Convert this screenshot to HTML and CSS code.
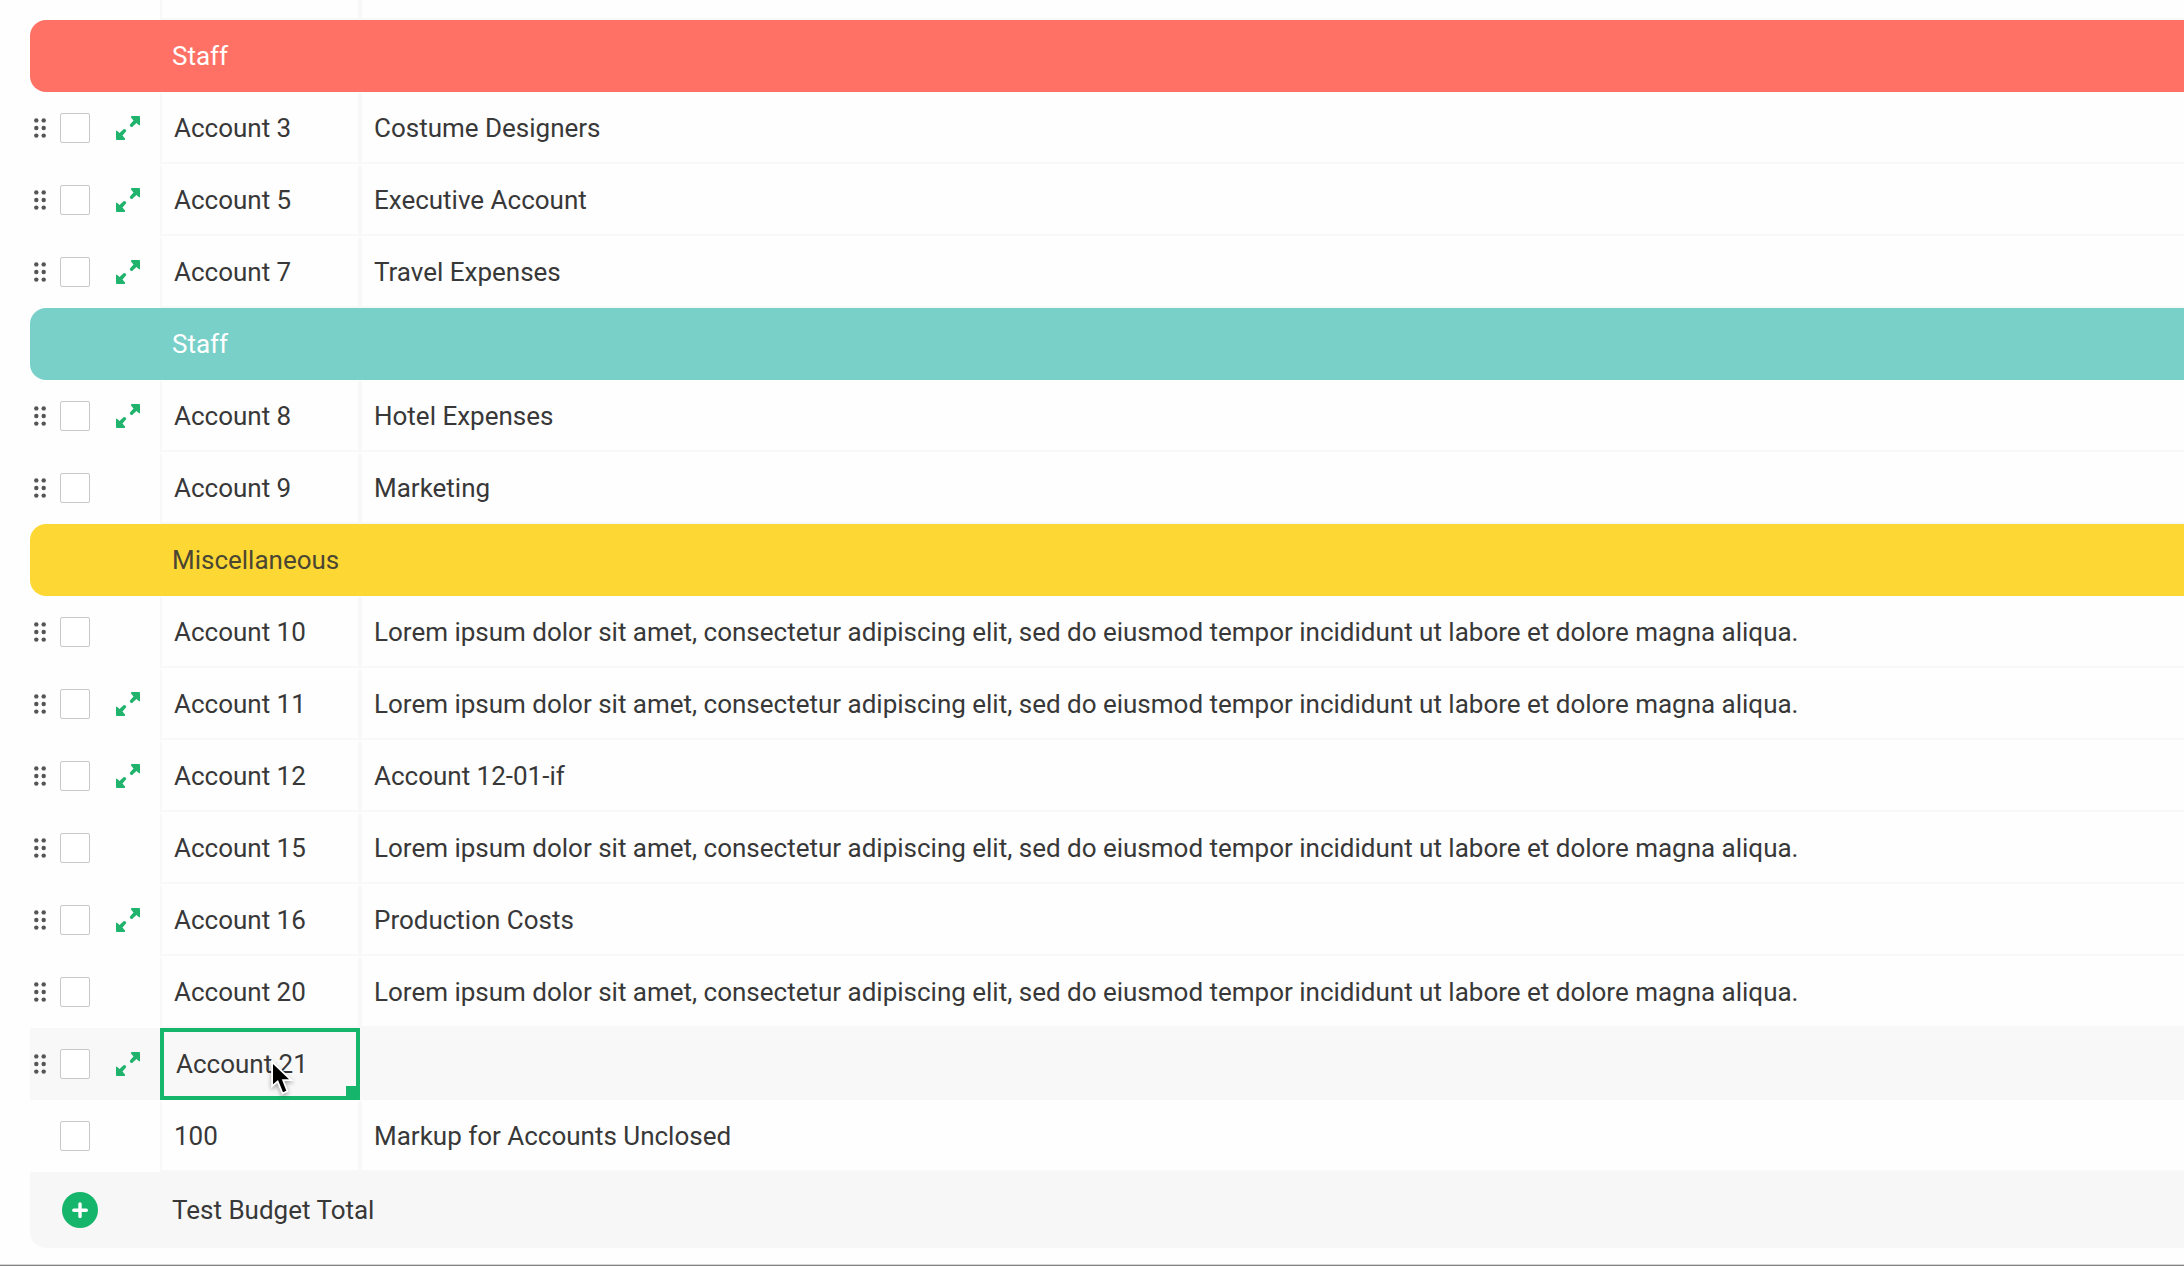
FILE: index.html
```
<!DOCTYPE html>
<html lang="en">
<head>
<meta charset="utf-8">
<title>Test Budget</title>
<link rel="stylesheet" href="styles.css">
</head>
<body>
<svg class="sprites" aria-hidden="true">
  <symbol id="grip" viewBox="0 0 12 20">
    <circle cx="2.3" cy="2.4" r="2.2"/><circle cx="9.7" cy="2.4" r="2.2"/>
    <circle cx="2.3" cy="10" r="2.2"/><circle cx="9.7" cy="10" r="2.2"/>
    <circle cx="2.3" cy="17.6" r="2.2"/><circle cx="9.7" cy="17.6" r="2.2"/>
  </symbol>
  <symbol id="expand" viewBox="0 0 24 24">
    <path d="M16 0h7q1 0 1 1v7.500q0 1.500-1.300.6L20.500 7l-3.800 3.400q-1.200 1-2.300 0t0-2.300L17.500 4.500L15 1.600Q14.300 0 16 0z"/>
    <path d="M8 24H1q-1 0-1-1v-7.500q0-1.500 1.300-.6L3.500 17l3.800-3.400q1.200-1 2.300 0t0 2.300L6.500 19.500L9 22.400Q9.700 24 8 24z"/>
  </symbol>
</svg>
<main class="table">
  <div class="row row-cut"><div class="tools"></div><div class="cell id"></div><div class="cell text"></div></div>

  <div class="group coral">Staff</div>
  <div class="row"><div class="tools"><svg class="grip"><use href="#grip"/></svg><span class="check"></span><svg class="expand"><use href="#expand"/></svg></div><div class="cell id">Account 3</div><div class="cell text">Costume Designers</div></div>
  <div class="row"><div class="tools"><svg class="grip"><use href="#grip"/></svg><span class="check"></span><svg class="expand"><use href="#expand"/></svg></div><div class="cell id">Account 5</div><div class="cell text">Executive Account</div></div>
  <div class="row"><div class="tools"><svg class="grip"><use href="#grip"/></svg><span class="check"></span><svg class="expand"><use href="#expand"/></svg></div><div class="cell id">Account 7</div><div class="cell text">Travel Expenses</div></div>

  <div class="group teal">Staff</div>
  <div class="row"><div class="tools"><svg class="grip"><use href="#grip"/></svg><span class="check"></span><svg class="expand"><use href="#expand"/></svg></div><div class="cell id">Account 8</div><div class="cell text">Hotel Expenses</div></div>
  <div class="row"><div class="tools"><svg class="grip"><use href="#grip"/></svg><span class="check"></span></div><div class="cell id">Account 9</div><div class="cell text">Marketing</div></div>

  <div class="group yellow">Miscellaneous</div>
  <div class="row"><div class="tools"><svg class="grip"><use href="#grip"/></svg><span class="check"></span></div><div class="cell id">Account 10</div><div class="cell text">Lorem ipsum dolor sit amet, consectetur adipiscing elit, sed do eiusmod tempor incididunt ut labore et dolore magna aliqua.</div></div>
  <div class="row"><div class="tools"><svg class="grip"><use href="#grip"/></svg><span class="check"></span><svg class="expand"><use href="#expand"/></svg></div><div class="cell id">Account 11</div><div class="cell text">Lorem ipsum dolor sit amet, consectetur adipiscing elit, sed do eiusmod tempor incididunt ut labore et dolore magna aliqua.</div></div>
  <div class="row"><div class="tools"><svg class="grip"><use href="#grip"/></svg><span class="check"></span><svg class="expand"><use href="#expand"/></svg></div><div class="cell id">Account 12</div><div class="cell text">Account 12-01-if</div></div>
  <div class="row"><div class="tools"><svg class="grip"><use href="#grip"/></svg><span class="check"></span></div><div class="cell id">Account 15</div><div class="cell text">Lorem ipsum dolor sit amet, consectetur adipiscing elit, sed do eiusmod tempor incididunt ut labore et dolore magna aliqua.</div></div>
  <div class="row"><div class="tools"><svg class="grip"><use href="#grip"/></svg><span class="check"></span><svg class="expand"><use href="#expand"/></svg></div><div class="cell id">Account 16</div><div class="cell text">Production Costs</div></div>
  <div class="row"><div class="tools"><svg class="grip"><use href="#grip"/></svg><span class="check"></span></div><div class="cell id">Account 20</div><div class="cell text">Lorem ipsum dolor sit amet, consectetur adipiscing elit, sed do eiusmod tempor incididunt ut labore et dolore magna aliqua.</div></div>
  <div class="row hovered"><div class="tools"><svg class="grip"><use href="#grip"/></svg><span class="check"></span><svg class="expand"><use href="#expand"/></svg></div><div class="cell id selected">Account 21<svg class="cursor" viewBox="0 0 26 36"><path d="M3 2V22.300L8 18L13 30.200L16.300 28.800L11.800 17.300H19Z"/></svg></div><div class="cell text"></div></div>
  <div class="row"><div class="tools"><span class="check"></span></div><div class="cell id">100</div><div class="cell text">Markup for Accounts Unclosed</div></div>

  <footer class="total">
    <button class="add" aria-label="Add account"><svg viewBox="0 0 36 36"><path d="M18 12v12.500M11.800 18.200h12.500"/></svg></button>
    <span>Test Budget Total</span>
  </footer>
</main>
</body>
</html>
```
FILE: styles.css
```
* { box-sizing: border-box; }

body {
  margin: 0;
  height: 1266px;
  overflow: hidden;
  display: flex;
  flex-direction: column;
  justify-content: space-between;
  background: #fefefe;
  border-bottom: 1px solid #858585;
  box-shadow: inset 0 -1px #d4d4d4;
  color: #383838;
  font: 26px/36px Roboto, sans-serif;
  letter-spacing: -0.006px;
}

.sprites { display: none; }

.table { padding-left: 30px; }

.row {
  display: grid;
  grid-template-columns: 130px 200px 1fr;
  height: 72px;
}
.row-cut { height: 20px; }

.tools {
  display: grid;
  grid-template-columns: 26px 30px 24px;
  align-items: center;
  padding-left: 4px;
}
.grip { width: 12px; height: 20px; fill: #555; grid-column: 1; }
.check {
  grid-column: 2;
  width: 30px;
  height: 30px;
  background: #fff;
  border: 1px solid #c8c8c8;
  border-radius: 2px;
}
.expand { grid-column: 3; width: 24px; height: 24px; margin-left: 26px; fill: #1fb36b; }

.cell {
  display: flex;
  align-items: center;
  border: 2px solid #f8f8f8;
  border-top-color: transparent;
  padding-left: 12px;
  white-space: nowrap;
}
.text { border-right: 0; }
.row-cut .cell { border-top: 0; }

.hovered { background: #f8f8f8; }
.selected {
  position: relative;
  border: 4px solid #15b56b;
}
.selected::after {
  content: "";
  position: absolute;
  right: -4px;
  bottom: -4px;
  width: 14px;
  height: 14px;
  background: #15b56b;
}
.cursor {
  position: absolute;
  left: 106px;
  top: 30px;
  width: 26px;
  height: 36px;
  overflow: visible;
  fill: #000;
  stroke: #fff;
  stroke-width: 3.6;
  paint-order: stroke;
  filter: drop-shadow(0 2px 2px rgba(0, 0, 0, .35));
}

.group {
  height: 72px;
  display: flex;
  align-items: center;
  padding-left: 142px;
  border-radius: 16px 0 0 16px;
}
.coral { background: #ff7165; color: #fff; }
.teal { background: #78d0c9; color: #fff; }
.yellow { background: #fdd835; color: #4b4632; }

.total {
  height: 76px;
  display: grid;
  grid-template-columns: 110px 1fr;
  align-items: center;
  padding-left: 32px;
  background: #f7f7f7;
  border-radius: 0 0 0 16px;
}
.add {
  width: 36px;
  height: 36px;
  padding: 0;
  border: 0;
  border-radius: 50%;
  background: #15b56b;
}
.add svg {
  display: block;
  fill: none;
  stroke: #fff;
  stroke-width: 3.4;
  stroke-linecap: round;
}
```
